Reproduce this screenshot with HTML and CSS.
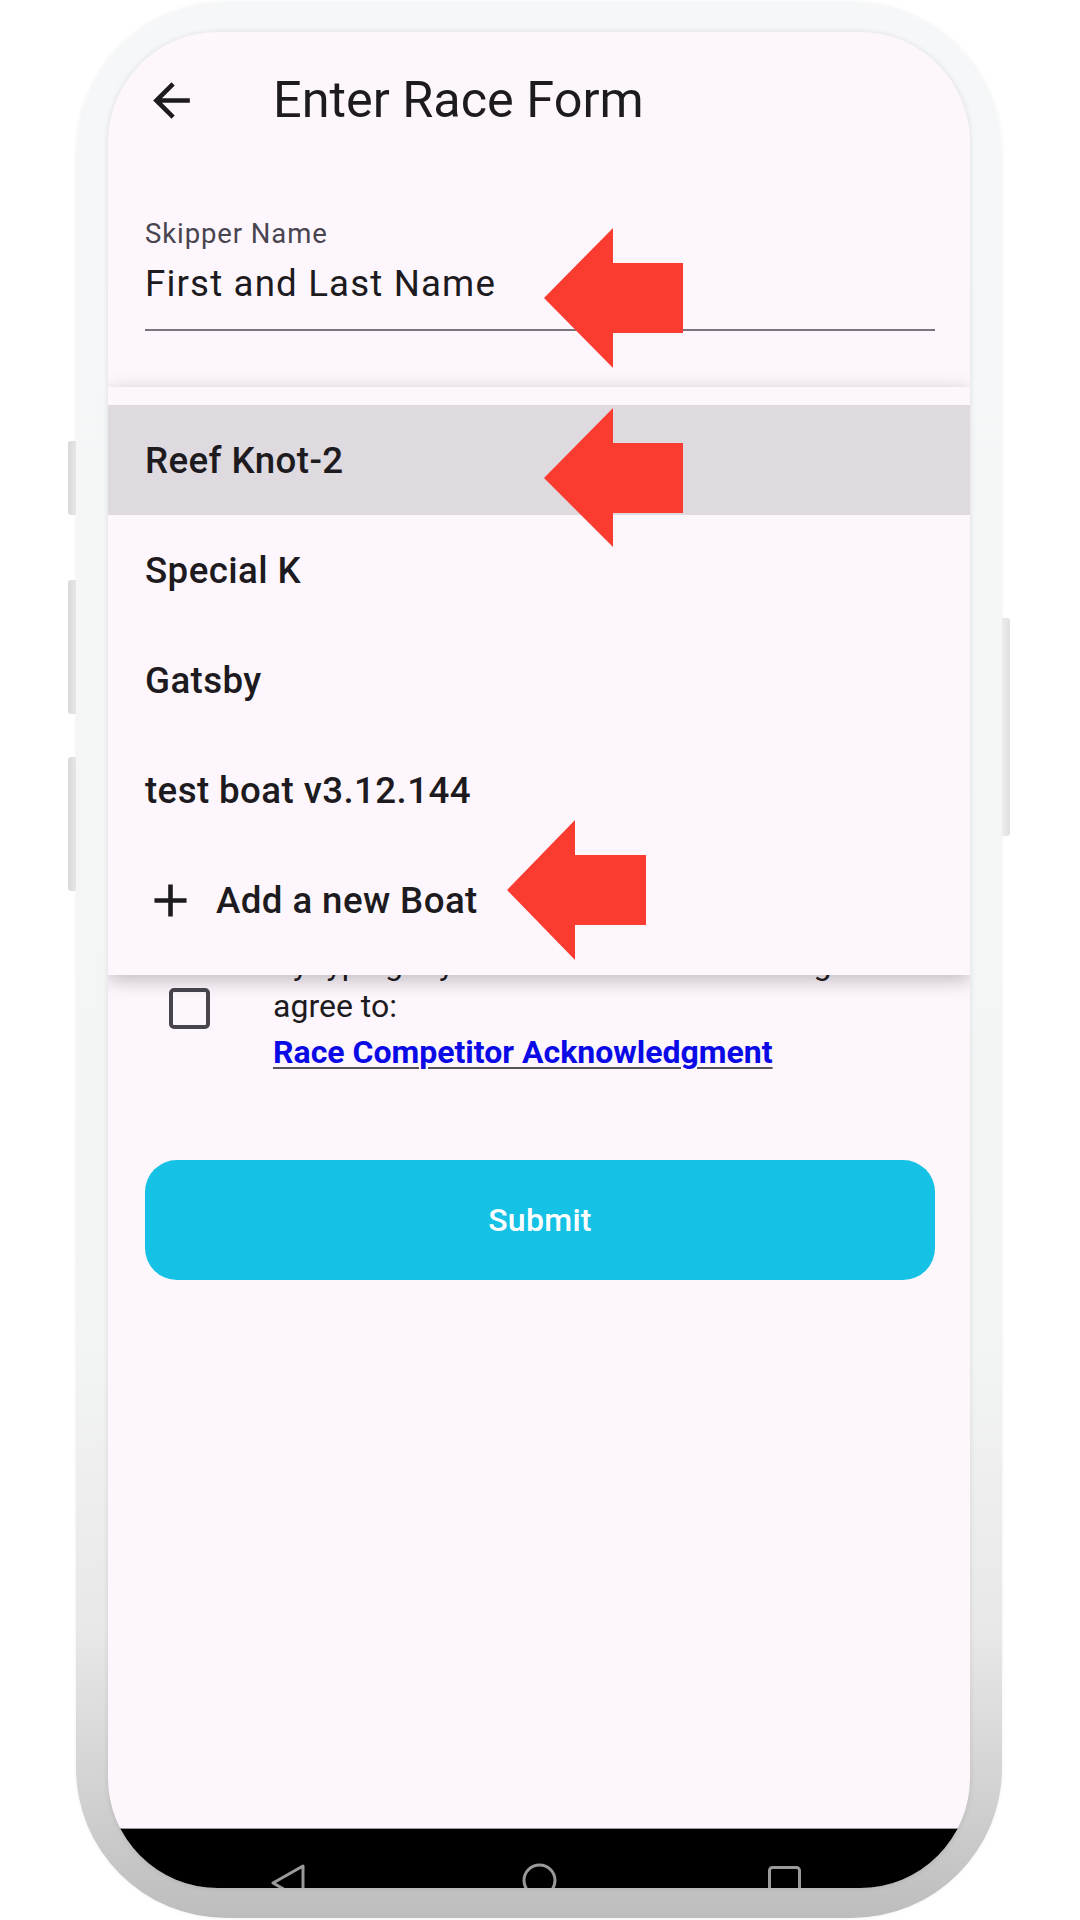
FILE: index.html
```html
<!DOCTYPE html>
<html lang="en">
<head>
<meta charset="utf-8">
<title>Enter Race Form</title>
<link rel="stylesheet" href="styles.css">
</head>
<body>
<div class="device">
  <span class="side-btn btn-a"></span>
  <span class="side-btn btn-b"></span>
  <span class="side-btn btn-c"></span>
  <span class="side-btn btn-r"></span>
  <div class="screen">
    <div class="content">
      <header class="appbar">
        <svg class="back" viewBox="0 0 24 24" width="55" height="55"><path d="M20 11H7.83l5.59-5.59L12 4l-8 8 8 8 1.41-1.41L7.83 13H20v-2z" fill="#1d1b20"/></svg>
        <h1 class="title">Enter Race Form</h1>
      </header>
      <form class="form">
        <div class="field">
          <label class="label">Skipper Name</label>
          <div class="input">First and Last Name</div>
        </div>
        <div class="agree">
          <span class="checkbox"></span>
          <div class="agree-text">
            <p class="line">By typing my name above I acknowledge and</p>
            <p class="line">agree to:</p>
            <a class="link" href="#">Race Competitor Acknowledgment</a>
          </div>
        </div>
        <button class="submit" type="button">Submit</button>
      </form>
      <div class="menu">
        <div class="item selected">Reef Knot-2</div>
        <div class="item">Special K</div>
        <div class="item">Gatsby</div>
        <div class="item">test boat v3.12.144</div>
        <div class="item add">
          <svg class="plus" viewBox="0 0 24 24" width="55" height="55"><path d="M19 13h-6v6h-2v-6H5v-2h6V5h2v6h6v2z" fill="#1d1b20"/></svg>
          <span>Add a new Boat</span>
        </div>
      </div>
    </div>
    <div class="navbar">
      <svg width="862" height="60" viewBox="0 0 862 60">
        <path d="M195 37 L165 54 L195 71 Z" fill="none" stroke="#9a9a9a" stroke-width="3" stroke-linejoin="round"/>
        <circle cx="431.5" cy="51.5" r="15.5" fill="none" stroke="#9a9a9a" stroke-width="3"/>
        <rect x="661.5" y="38.5" width="30" height="40" rx="3" fill="none" stroke="#9a9a9a" stroke-width="3"/>
      </svg>
    </div>
  </div>
</div>
<svg class="arrows" width="1080" height="1920" viewBox="0 0 1080 1920">
  <polygon points="544,298 613,228 613,263 683,263 683,333 613,333 613,368" fill="#fa3b30"/>
  <polygon points="544,478 613,408 613,443 683,443 683,513 613,513 613,547" fill="#fa3b30"/>
  <polygon points="507,890 575,820 575,855 646,855 646,925 575,925 575,960" fill="#fa3b30"/>
</svg>
</body>
</html>
```

FILE: styles.css
```css
html, body {
  margin: 0;
  padding: 0;
}
body {
  width: 1080px;
  height: 1920px;
  overflow: hidden;
  background: #ffffff;
  font-family: Roboto, "Noto Sans", sans-serif;
  position: relative;
}
.device {
  position: relative;
  box-sizing: border-box;
  width: 926px;
  height: 1916px;
  margin: 2px 0 0 76px;
  padding: 30px 32px;
  border-radius: 150px;
  background: linear-gradient(to bottom, #f6f7f8 0%, #f3f4f4 70%, #e8e8e8 85%, #d0d0d0 94%, #bdbdbd 100%);
  box-shadow: 0 0 4px rgba(0,0,0,0.06);
}
.side-btn {
  position: absolute;
  width: 8px;
  background: linear-gradient(to right, #d9d9d9, #e6e6e6);
}
.btn-a, .btn-b, .btn-c {
  left: -8px;
  border-radius: 3px 0 0 3px;
}
.btn-a { top: 439px; height: 74px; }
.btn-b { top: 578px; height: 134px; }
.btn-c { top: 755px; height: 134px; }
.btn-r {
  right: -8px;
  top: 616px;
  height: 218px;
  border-radius: 0 3px 3px 0;
  background: linear-gradient(to left, #e0e0e0, #ececec);
}
.screen {
  position: relative;
  height: 1856px;
  border-radius: 110px;
  overflow: hidden;
  background: #fdf7fd;
  display: flex;
  flex-direction: column;
  box-shadow: 0 0 5px 1px rgba(0,0,0,0.08);
}
.content {
  position: relative;
  flex: 1;
}
.appbar {
  height: 136px;
  display: flex;
  align-items: center;
  padding-left: 36px;
}
.back {
  display: block;
  flex: none;
}
.title {
  margin: 0 0 0 74px;
  font-size: 50.4px;
  font-weight: 400;
  color: #1d1b20;
  line-height: 58px;
}
.form {
  padding: 0 35px 0 37px;
}
.field {
  margin-top: 50px;
  border-bottom: 2px solid #7a757f;
  padding-bottom: 22px;
}
.label {
  display: block;
  font-size: 27.5px;
  line-height: 32px;
  color: #49454f;
  letter-spacing: 0.9px;
}
.input {
  margin-top: 11px;
  font-size: 36.7px;
  line-height: 46px;
  color: #1d1b20;
  letter-spacing: 1.15px;
}
.agree {
  display: flex;
  margin-top: 612px;
}
.checkbox {
  flex: none;
  box-sizing: border-box;
  width: 41px;
  height: 41px;
  margin: 45px 0 0 24px;
  border: 4.5px solid #49454f;
  border-radius: 5px;
}
.agree-text {
  margin-left: 63px;
}
.line {
  margin: 0;
  font-size: 32px;
  line-height: 42px;
  color: #1d1b20;
  white-space: nowrap;
}
.link {
  display: inline-block;
  margin-top: 4px;
  font-size: 32px;
  line-height: 42px;
  font-weight: 700;
  color: #0a0ae6;
  text-decoration: underline;
  text-decoration-color: #555;
  text-decoration-thickness: 2px;
  text-underline-offset: 4px;
}
.submit {
  display: block;
  width: 100%;
  height: 120px;
  margin-top: 87px;
  border: none;
  border-radius: 32px;
  background: #15c1e5;
  color: #ffffff;
  font-family: Roboto, sans-serif;
  font-size: 32px;
  font-weight: 500;
  letter-spacing: 0.3px;
}
.menu {
  position: absolute;
  top: 355px;
  left: 0;
  right: 0;
  padding: 18px 0 20px;
  background: #fdf7fd;
  box-shadow: 0 5px 18px rgba(0,0,0,0.25);
}
.item {
  height: 110px;
  display: flex;
  align-items: center;
  padding-left: 37px;
  font-size: 36.7px;
  font-weight: 500;
  letter-spacing: 0.4px;
  color: #1d1b20;
}
.item.selected {
  background: #dfdadf;
}
.plus {
  display: block;
  margin-left: -2px;
  margin-right: 18px;
}
.navbar {
  height: 60px;
  background: #000;
  overflow: hidden;
  border-top: 1px solid #9a9a9a;
  box-sizing: border-box;
}
.navbar svg {
  display: block;
}
.arrows {
  position: absolute;
  left: 0;
  top: 0;
  pointer-events: none;
}
```
